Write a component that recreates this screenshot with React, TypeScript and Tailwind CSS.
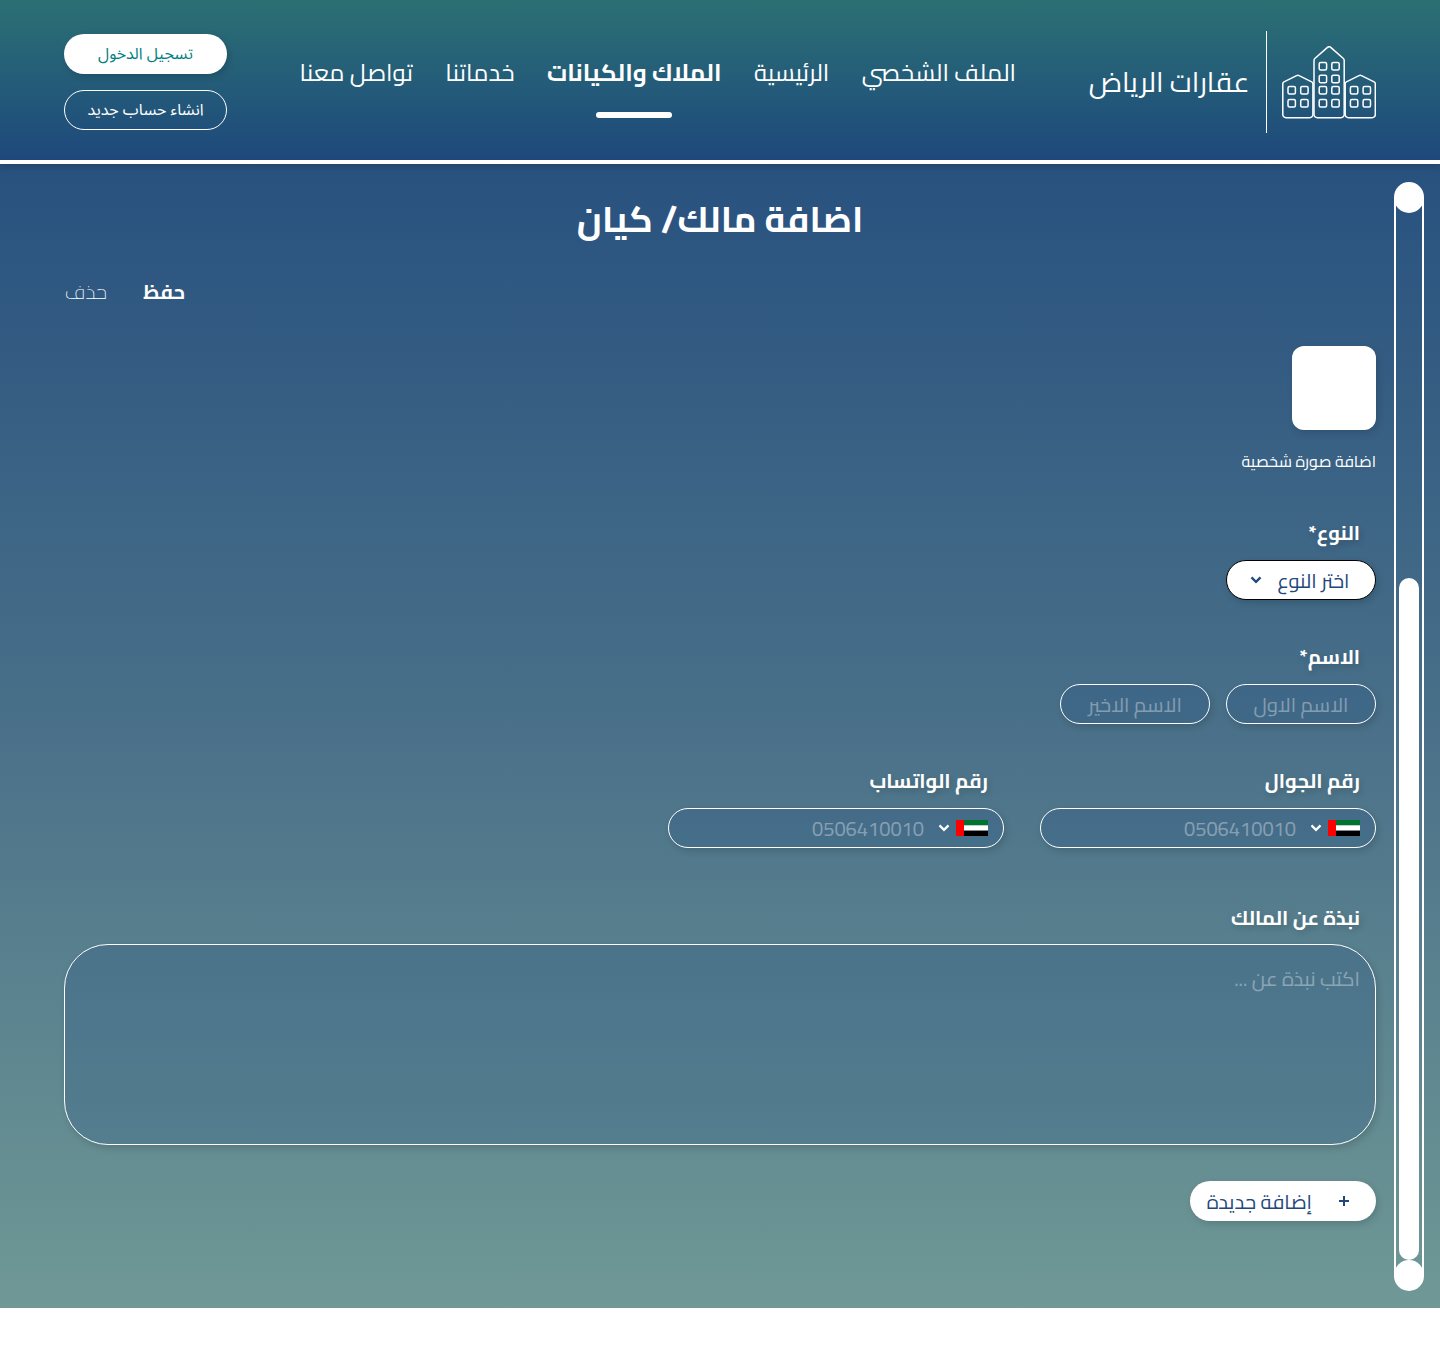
import type { ReactNode } from "react";

const SHADOW = "shadow-[2px_3px_7px_rgba(0,0,0,0.15)]";
const FIELD = `flex h-10 items-center rounded-[20px] border border-white bg-[rgba(34,80,131,0.25)] ${SHADOW}`;

function House({ x }: { x: number }) {
  return (
    <g transform={`translate(${x} 0)`}>
      <path d="M.8 37.8c0-.9.4-1.6 1.2-2L14.600 29.600c.8-.4 1.700-.4 2.500 0L29.700 35.800c.8.4 1.200 1.100 1.200 2V68.500a3.200 3.200 0 0 1-3.200 3.200H4a3.200 3.200 0 0 1-3.200-3.200Z" />
      {[40.5, 53.5].map((y) =>
        [6, 18.7].map((wx) => <rect key={`${wx}-${y}`} x={wx} y={y} width="7.400" height="7.400" rx="1.500" />)
      )}
    </g>
  );
}

function Logo() {
  return (
    <svg width="94" height="73" viewBox="0 0 94 73" fill="none" stroke="white" strokeWidth="1.500" className="relative top-[0.5px]">
      <House x={0} />
      <House x={62.4} />
      <path d="M32 14.500c0-1 .4-1.700 1.100-2.300L45.200 1.600c1.100-1 2.700-1 3.800 0L61.100 12.200c.7.6 1.100 1.300 1.100 2.300V68.500a3.200 3.200 0 0 1-3.200 3.200H35.200A3.200 3.200 0 0 1 32 68.500Z" />
      {[16.5, 29.3, 40.5, 53.5].map((y) =>
        [37.2, 49.8].map((x) => <rect key={`${x}-${y}`} x={x} y={y} width="7.400" height="7.400" rx="1.500" />)
      )}
    </svg>
  );
}

function Chevron() {
  return (
    <svg width="12" height="8" viewBox="0 0 12 8" fill="none" stroke="currentColor" strokeWidth="2.200">
      <path d="M1.500 1.400 6 5.900l4.500-4.500" />
    </svg>
  );
}

function Flag() {
  return (
    <svg width="32" height="16" viewBox="0 0 32 16">
      <path fill="#00732f" d="M8 0h24v5.330H8z" />
      <path fill="#fff" d="M8 5.330h24v5.340H8z" />
      <path fill="#000" d="M8 10.670h24V16H8z" />
      <path fill="#f00" d="M0 0h8v16H0z" />
    </svg>
  );
}

function NavItem({ children, active = false }: { children: ReactNode; active?: boolean }) {
  return (
    <a className={`relative whitespace-nowrap text-2xl leading-[41px] ${active ? "font-bold" : "font-normal"}`}>
      {children}
      {active && <span className="absolute top-[59.500px] left-1/2 h-[6px] w-[76px] -translate-x-1/2 rounded-full bg-white" />}
    </a>
  );
}

function Group({ label, children }: { label: string; children: ReactNode }) {
  return (
    <div className="flex flex-col gap-[7px]">
      <label className="pr-4 text-xl leading-[41px] font-bold [text-shadow:2px_3px_6px_rgba(0,0,0,0.16)]">{label}</label>
      {children}
    </div>
  );
}

function Phone({ label }: { label: string }) {
  return (
    <Group label={label}>
      <div className={`${FIELD} w-[336px] pr-[15px]`}>
        <Flag />
        <span className="mr-1.5">
          <Chevron />
        </span>
        <span className="mr-3.5 pt-px text-xl opacity-35">0506410010</span>
      </div>
    </Group>
  );
}

function ScrollTrack() {
  return (
    <div className="absolute top-[18px] right-4 flex h-[1109px] w-[30px] flex-col">
      <span className="h-[31px] w-full shrink-0 rounded-full bg-white" />
      <div className="-my-4 flex grow items-end justify-center border-x-2 border-white pb-4">
        <span className="h-[682px] w-5 rounded-full bg-white" />
      </div>
      <span className="h-[31px] w-full shrink-0 rounded-full bg-white" />
    </div>
  );
}

export default function App() {
  return (
    <div dir="rtl" className="min-h-[1350px] bg-white font-['Cairo','Noto_Kufi_Arabic',sans-serif] text-white">
      <header className="relative z-10 flex h-[164px] items-start justify-between border-b-4 border-white bg-linear-to-b from-[#2c7073] to-[#1f487c] px-16 shadow-[0_3px_6px_rgba(0,0,0,0.16)]">
        <div className="flex h-[164px] items-center">
          <Logo />
          <span className="mr-[15px] h-[102px] w-[1.500px] bg-white" />
          <span className="mr-4 text-[28px] leading-10 whitespace-nowrap">عقارات الرياض</span>
        </div>
        <nav className="flex gap-[32.500px] pt-[52px]">
          <NavItem>الملف الشخصي</NavItem>
          <NavItem>الرئيسية</NavItem>
          <NavItem active>الملاك والكيانات</NavItem>
          <NavItem>خدماتنا</NavItem>
          <NavItem>تواصل معنا</NavItem>
        </nav>
        <div className="flex w-[163px] flex-col gap-4 pt-[34px] font-['Noto_Sans_Arabic',sans-serif] text-base">
          <button className={`h-10 rounded-full bg-white text-[#008080] ${SHADOW}`}>تسجيل الدخول</button>
          <button className="h-10 rounded-full border border-white">انشاء حساب جديد</button>
        </div>
      </header>

      <main className="relative flex h-[1144px] flex-col bg-[linear-gradient(to_bottom,#28517f,#4a7189_50%,#6f9896)] px-16">
        <ScrollTrack />
        <h1 className="pt-[30px] text-center text-4xl leading-[50px] font-bold">اضافة مالك/ كيان</h1>
        <div className="mt-7 flex justify-end gap-[36.500px] pl-px text-xl leading-10">
          <button className="font-bold">حفظ</button>
          <button className="font-extralight">حذف</button>
        </div>
        <div className={`mt-[34px] size-[84px] rounded-xl bg-white ${SHADOW}`} />
        <p className="mt-[15px] text-base leading-8">اضافة صورة شخصية</p>

        <form className="mt-[35px] flex flex-col gap-9">
          <Group label="النوع*">
            <div className={`flex h-10 w-[150px] items-center rounded-[20px] border border-black bg-white pr-[25.500px] text-xl text-[#1f487c] ${SHADOW}`}>
              <span className="pt-px">اختر النوع</span>
              <span className="mr-[15px]">
                <Chevron />
              </span>
            </div>
          </Group>
          <Group label="الاسم*">
            <div className="flex gap-4 text-xl">
              <div className={`${FIELD} w-[150px] justify-center`}>
                <span className="pt-px opacity-35">الاسم الاول</span>
              </div>
              <div className={`${FIELD} w-[150px] justify-center`}>
                <span className="pt-px opacity-35">الاسم الاخير</span>
              </div>
            </div>
          </Group>
          <div className="flex gap-9">
            <Phone label="رقم الجوال" />
            <Phone label="رقم الواتساب" />
          </div>
          <div className="mt-[13px]">
            <Group label="نبذة عن المالك">
              <div className={`-mt-px h-[201px] rounded-[44px] border border-white bg-[rgba(34,80,131,0.25)] px-[15px] pt-3.5 text-xl leading-10 ${SHADOW}`}>
                <span className="opacity-35">اكتب نبذة عن ...</span>
              </div>
            </Group>
          </div>
          <button type="button" className={`flex h-10 w-[186px] items-center rounded-[20px] bg-white pr-[27px] text-xl text-[#1f487c] ${SHADOW}`}>
            <svg width="10" height="10" viewBox="0 0 10 10" stroke="currentColor" strokeWidth="2">
              <path d="M5 0v10M0 5h10" />
            </svg>
            <span className="mr-[27px] pt-px">إضافة جديدة</span>
          </button>
        </form>
      </main>
    </div>
  );
}
